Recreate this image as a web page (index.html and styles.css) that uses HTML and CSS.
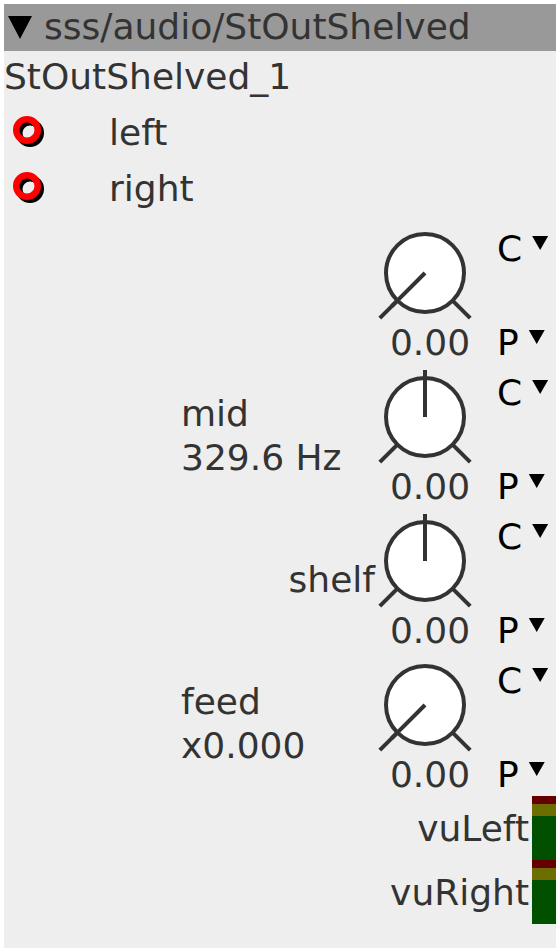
FILE: index.html
```html
<!DOCTYPE html>
<html lang="en">
<head>
  <meta charset="UTF-8">
  <title>sss/audio/StOutShelved</title>
  <link rel="stylesheet" href="styles.css">
</head>
<body>
  <div class="panel">
    <div class="head"><span class="tri"></span>sss/audio/StOutShelved</div>
    <div class="name">StOutShelved_1</div>

    <ul class="inputs">
      <li>
        <svg class="port" width="34" height="34" viewBox="0 0 34 34">
          <circle cx="18" cy="18" r="10.75" fill="none" stroke="#000" stroke-width="6.5"/>
          <circle cx="15" cy="15" r="10.75" fill="none" stroke="#f00" stroke-width="6.5"/>
        </svg>
        <span>left</span>
      </li>
      <li>
        <svg class="port" width="34" height="34" viewBox="0 0 34 34">
          <circle cx="18" cy="18" r="10.75" fill="none" stroke="#000" stroke-width="6.5"/>
          <circle cx="15" cy="15" r="10.75" fill="none" stroke="#f00" stroke-width="6.5"/>
        </svg>
        <span>right</span>
      </li>
    </ul>

    <div class="knobs">
      <div class="knob">
        <div class="label"></div>
        <div class="dial">
          <svg width="96" height="96" viewBox="0 0 96 96">
            <circle cx="48" cy="48" r="39" fill="#fff" stroke="#333" stroke-width="4"/>
            <line x1="20.4" y1="75.6" x2="2.8" y2="93.2" stroke="#333" stroke-width="4"/>
            <line x1="75.6" y1="75.6" x2="93.2" y2="93.2" stroke="#333" stroke-width="4"/>
            <line x1="48" y1="48" x2="14.8" y2="81.2" stroke="#333" stroke-width="4"/>
          </svg>
          <div class="value">0.00</div>
        </div>
        <div class="side">
          <div class="sel">C<span class="arrow"></span></div>
          <div class="sel">P<span class="arrow"></span></div>
        </div>
      </div>

      <div class="knob">
        <div class="label"><span>mid</span><span>329.6 Hz</span></div>
        <div class="dial">
          <svg width="96" height="96" viewBox="0 0 96 96">
            <circle cx="48" cy="48" r="39" fill="#fff" stroke="#333" stroke-width="4"/>
            <line x1="20.4" y1="75.6" x2="2.8" y2="93.2" stroke="#333" stroke-width="4"/>
            <line x1="75.6" y1="75.6" x2="93.2" y2="93.2" stroke="#333" stroke-width="4"/>
            <line x1="48" y1="48" x2="48" y2="1" stroke="#333" stroke-width="4"/>
          </svg>
          <div class="value">0.00</div>
        </div>
        <div class="side">
          <div class="sel">C<span class="arrow"></span></div>
          <div class="sel">P<span class="arrow"></span></div>
        </div>
      </div>

      <div class="knob">
        <div class="label right"><span>shelf</span></div>
        <div class="dial">
          <svg width="96" height="96" viewBox="0 0 96 96">
            <circle cx="48" cy="48" r="39" fill="#fff" stroke="#333" stroke-width="4"/>
            <line x1="20.4" y1="75.6" x2="2.8" y2="93.2" stroke="#333" stroke-width="4"/>
            <line x1="75.6" y1="75.6" x2="93.2" y2="93.2" stroke="#333" stroke-width="4"/>
            <line x1="48" y1="48" x2="48" y2="1" stroke="#333" stroke-width="4"/>
          </svg>
          <div class="value">0.00</div>
        </div>
        <div class="side">
          <div class="sel">C<span class="arrow"></span></div>
          <div class="sel">P<span class="arrow"></span></div>
        </div>
      </div>

      <div class="knob">
        <div class="label"><span>feed</span><span>x0.000</span></div>
        <div class="dial">
          <svg width="96" height="96" viewBox="0 0 96 96">
            <circle cx="48" cy="48" r="39" fill="#fff" stroke="#333" stroke-width="4"/>
            <line x1="20.4" y1="75.6" x2="2.8" y2="93.2" stroke="#333" stroke-width="4"/>
            <line x1="75.6" y1="75.6" x2="93.2" y2="93.2" stroke="#333" stroke-width="4"/>
            <line x1="48" y1="48" x2="14.8" y2="81.2" stroke="#333" stroke-width="4"/>
          </svg>
          <div class="value">0.00</div>
        </div>
        <div class="side">
          <div class="sel">C<span class="arrow"></span></div>
          <div class="sel">P<span class="arrow"></span></div>
        </div>
      </div>
    </div>

    <div class="vu">
      <div class="vu-row">
        <span>vuLeft</span>
        <div class="meter"><i class="peak"></i><i class="warn"></i><i class="ok"></i></div>
      </div>
      <div class="vu-row">
        <span>vuRight</span>
        <div class="meter"><i class="peak"></i><i class="warn"></i><i class="ok"></i></div>
      </div>
    </div>
  </div>
</body>
</html>
```

FILE: styles.css
```css
body {
  margin: 4px;
  background: #fff;
  font-family: "DejaVu Sans", sans-serif;
  font-size: 36px;
  color: #333;
}
.panel {
  width: 552px;
  height: 944px;
  background: #eee;
}
.head {
  height: 47px;
  line-height: 46px;
  background: #999;
  white-space: nowrap;
}
.tri {
  display: inline-block;
  width: 24px;
  height: 23px;
  margin: 0 12px 0 4px;
  background: #000;
  clip-path: polygon(0 0, 100% 0, 50% 100%);
}
.name {
  height: 53px;
  line-height: 52px;
}
.inputs {
  list-style: none;
  margin: 0;
  padding: 0;
}
.inputs li {
  display: flex;
  align-items: center;
  height: 56px;
  padding-left: 8px;
}
.port {
  display: block;
  margin-right: 63px;
}
.knobs {
  margin-top: 4px;
}
.knob {
  display: grid;
  grid-template-columns: 196px 96px 83px;
  height: 144px;
  margin-left: 177px;
}
.label {
  display: flex;
  flex-direction: column;
  justify-content: center;
  line-height: 44px;
}
.label.right {
  align-items: flex-end;
  padding-right: 2px;
}
.dial svg {
  display: block;
  margin-top: 5px;
}
.value {
  line-height: 43px;
  text-align: center;
  padding-left: 10px;
  white-space: nowrap;
}
.side {
  display: flex;
  flex-direction: column;
  justify-content: space-between;
  padding: 8px 0 0 24px;
  color: #000;
}
.sel {
  line-height: 42px;
}
.arrow {
  display: inline-block;
  width: 16px;
  height: 14px;
  margin-left: 10px;
  vertical-align: 11px;
  background: #000;
  clip-path: polygon(0 0, 100% 0, 50% 100%);
}
.vu-row {
  display: flex;
  justify-content: flex-end;
  align-items: center;
  height: 64px;
}
.vu-row span {
  margin-right: 3px;
}
.meter {
  display: flex;
  flex-direction: column;
  width: 24px;
  height: 64px;
}
.meter i {
  display: block;
}
.meter .peak { height: 8px; background: #640000; }
.meter .warn { height: 12px; background: #6e6e00; }
.meter .ok { flex: 1; background: #005000; }
```
